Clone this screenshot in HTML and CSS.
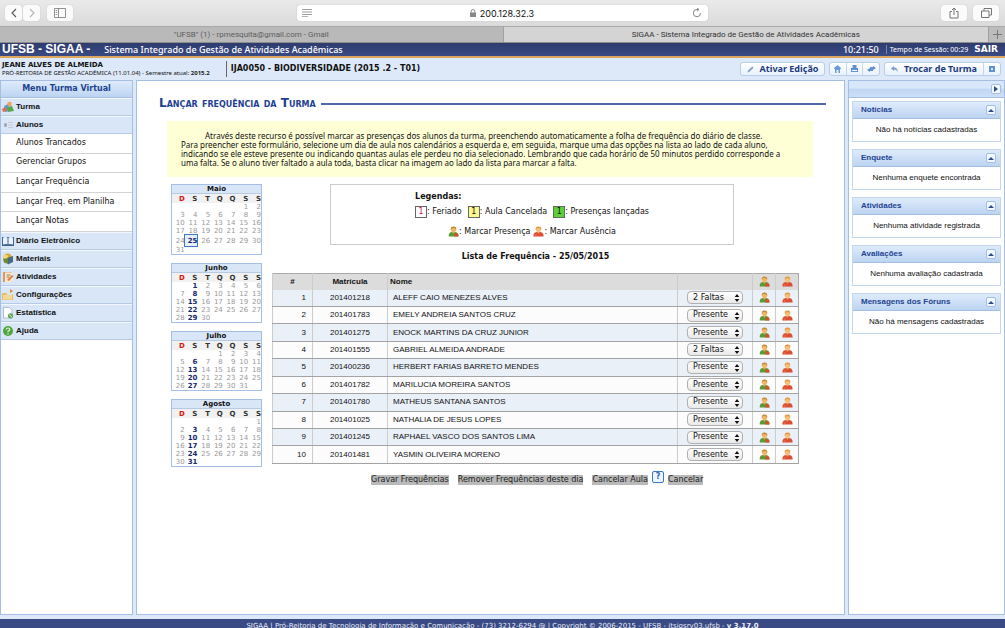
FILE: index.html
```html
<!DOCTYPE html>
<html lang="pt-BR">
<head>
<meta charset="utf-8">
<meta name="viewport" content="width=device-width, initial-scale=1">
<title>SIGAA - Sistema Integrado de Gestão de Atividades Acadêmicas</title>
<link rel="stylesheet" href="styles.css">
</head>
<body>
<svg class="defs" aria-hidden="true">
  <symbol id="person-present" viewBox="0 0 12 12">
    <path d="M.8 11.500V9.500Q1.200 7 4 6.600L8 6.600Q10.800 7 11 9.500V11.500Z" fill="#5a9a35"/>
    <path d="M6.500 11.500L7.500 7.800Q10.700 7.200 11.500 9.500V11.500Z" fill="#d0532c"/>
    <path d="M4 6.500L6 8.500L8 6.500Z" fill="#d9a24c"/>
    <circle cx="6" cy="3.800" r="2.900" fill="#efb869"/>
    <path d="M3 4Q2.600 .6 6 .5Q9.400 .6 9 4Q8 2.200 6 2.200Q4 2.200 3 4Z" fill="#c58a35"/>
  </symbol>
  <symbol id="person-absent" viewBox="0 0 12 12">
    <path d="M.5 11.500V9.500Q1 7 4 6.600L8 6.600Q11 7 11.500 9.500V11.500Z" fill="#dc4e34"/>
    <path d="M1.500 8.800L4.200 11.300M4.200 8.800L1.500 11.300" stroke="#ea7358" stroke-width=".8"/>
    <path d="M4 6.500L6 8.500L8 6.500Z" fill="#e89a50"/>
    <circle cx="6" cy="3.800" r="2.900" fill="#f6bf7c"/>
    <path d="M3 4Q2.600 .6 6 .5Q9.400 .6 9 4Q8 2.200 6 2.200Q4 2.200 3 4Z" fill="#e09a45"/>
  </symbol>
  <symbol id="updown" viewBox="0 0 6 8">
    <path d="M3 0L5.300 3H.7ZM3 8L.7 5H5.300Z" fill="#111"/>
  </symbol>
</svg>

<header class="browser">
  <div class="toolbar">
    <div class="group">
      <div class="nav-pair">
        <button class="chrome-btn" aria-label="Voltar"><svg width="8" height="10" viewBox="0 0 8 10"><path d="M6 1L2 5L6 9" fill="none" stroke="#555" stroke-width="1.100"/></svg></button>
        <button class="chrome-btn" aria-label="Avançar"><svg width="8" height="10" viewBox="0 0 8 10"><path d="M2 1L6 5L2 9" fill="none" stroke="#b5b5b5" stroke-width="1.100"/></svg></button>
      </div>
      <button class="chrome-btn wide" aria-label="Barra lateral"><svg width="12" height="10" viewBox="0 0 12 10"><path d="M.5.500h11v9H.5zM4.500.500v9M1.700 2.500h1.500M1.700 4.500h1.500M1.700 6.500h1.500" fill="none" stroke="#777" stroke-width=".8"/></svg></button>
    </div>
    <div class="address">
      <svg width="10" height="8" viewBox="0 0 10 8"><path d="M0 .5h10M0 3h10M0 5.500h10M0 7.700h6" stroke="#888" stroke-width=".8"/></svg>
      <span class="url"><svg width="6" height="8" viewBox="0 0 6 8"><path d="M0 3.500h6V8H0z" fill="#888"/><path d="M1.200 4V2.300a1.800 1.800 0 0 1 3.600 0V4" fill="none" stroke="#888" stroke-width=".9"/></svg>200.128.32.3</span>
      <svg width="10" height="10" viewBox="0 0 10 10"><path d="M8.500 5A3.600 3.600 0 1 1 5 1.500H6.500M5 0L7 1.500L5 3.200" fill="none" stroke="#777" stroke-width=".9"/></svg>
    </div>
    <div class="group end">
      <button class="chrome-btn tool" aria-label="Compartilhar"><svg width="10" height="12" viewBox="0 0 10 12"><path d="M3 4.500H1V11H9V4.500H7M5 8V1M3 3L5 1L7 3" fill="none" stroke="#666" stroke-width=".9"/></svg></button>
      <button class="chrome-btn tool" aria-label="Abas"><svg width="11" height="10" viewBox="0 0 11 10"><path d="M3 2.500V.5H10.500V7H8M.5 3H8V9.500H.5Z" fill="none" stroke="#666" stroke-width=".9"/></svg></button>
    </div>
  </div>
  <div class="tabs">
    <button class="tab">"UFSB" (1) - rpmesquita@gmail.com - Gmail</button>
    <button class="tab active">SIGAA - Sistema Integrado de Gestão de Atividades Acadêmicas</button>
    <button class="tab-add" aria-label="Nova aba"><svg width="9" height="9" viewBox="0 0 9 9"><path d="M4.500 0v9M0 4.500h9" stroke="#777"/></svg></button>
  </div>
</header>

<div class="system-bar">
  <strong class="brand">UFSB - SIGAA -</strong>
  <span class="system">Sistema Integrado de Gestão de Atividades Acadêmicas</span>
  <span class="clock">10:21:50</span>
  <span class="session">Tempo de Sessão: 00:29</span>
  <a class="exit" href="#">SAIR</a>
</div>

<div class="class-bar">
  <div class="user"><strong class="user-name">JEANE ALVES DE ALMEIDA</strong><span>PRÓ-REITORIA DE GESTÃO ACADÊMICA (11.01.04) - Semestre atual: <b>2015.2</b></span></div>
  <strong class="course">IJA0050 - BIODIVERSIDADE (2015 .2 - T01)</strong>
  <div class="actions">
    <button class="pill edit"><svg width="7" height="7" viewBox="0 0 7 7"><path d="M.5 6.500L1 4.800L5.300.5L6.500 1.700L2.200 6Z" fill="#7d9cc9"/></svg>Ativar Edição</button>
    <div class="pill trio">
      <button aria-label="Início"><svg width="7" height="8" viewBox="0 0 7 8"><path d="M0 3L3.500 0L7 3V4H6V8H1V4H0Z" fill="#6b9bd4"/><path d="M2.500 5h2v3h-2z" fill="#e6f0fb"/></svg></button>
      <button aria-label="Imprimir"><svg width="7" height="8" viewBox="0 0 7 8"><path d="M1.500 0h4v3H7v4H0V3H1.500Z" fill="#5f92d0"/><path d="M1 5h5v1H1z" fill="#fff"/></svg></button>
      <button aria-label="Alternar"><svg width="9" height="6" viewBox="0 0 9 6"><path d="M3 1h3V0l3 2-3 2V3H3zM6 3v2H3v1L0 4l3-2v1z" fill="#5f92d0"/></svg></button>
    </div>
    <div class="pill swap">
      <button class="swap-main"><svg width="7" height="6" viewBox="0 0 7 6"><path d="M3 0L0 2.500L3 5V3.500Q6 3.200 6.500 6Q7 1.800 3 1.600Z" fill="#7d9cc9"/></svg>Trocar de Turma</button>
      <button class="swap-more" aria-label="Mais"><svg width="6" height="6" viewBox="0 0 6 6"><path d="M0 0h6v6H0z" fill="#5f92d0"/><path d="M2 2h2v2H2z" fill="#dbe9fa"/></svg></button>
    </div>
  </div>
</div>

<div class="workspace">
  <nav class="menu">
    <h2 class="menu-title">Menu Turma Virtual</h2>
    <a class="menu-item" href="#"><svg width="12" height="12" viewBox="0 0 12 12"><path d="M2 5l4-2 2 7-5 1z" fill="#5d9bd8"/><circle cx="7.500" cy="3" r="2.300" fill="#f0a35a"/><path d="M5 6l5-1 2 5-6 1z" fill="#59a845"/><path d="M0 8l3-2 2 4-4 1z" fill="#e06f4d"/></svg>Turma</a>
    <a class="menu-item" href="#"><svg width="12" height="12" viewBox="0 0 12 12"><path d="M2 4h3v4H2zM6 3h5v1H6zM6 5.500h5v1H6zM6 8h5v1H6z" fill="#c3cbd5"/><path d="M2.500 4.500h2v3h-2z" fill="#8d9bac"/></svg>Alunos</a>
    <ul class="submenu">
      <li><a href="#">Alunos Trancados</a></li>
      <li><a href="#">Gerenciar Grupos</a></li>
      <li><a href="#">Lançar Frequência</a></li>
      <li><a href="#">Lançar Freq. em Planilha</a></li>
      <li><a href="#">Lançar Notas</a></li>
    </ul>
    <a class="menu-item" href="#"><svg width="12" height="12" viewBox="0 0 12 12"><path d="M0 2h12v9H0z" fill="#3d6396"/><path d="M1 2.500q3-1 4.500.3V9.300Q4 8.500 1 9.500zM11 2.500q-3-1-4.500.3V9.300Q8 8.500 11 9.500z" fill="#e9f2fc"/></svg>Diário Eletrônico</a>
    <a class="menu-item" href="#"><svg width="12" height="12" viewBox="0 0 12 12"><circle cx="5.500" cy="5" r="4.500" fill="#d9a928"/><path d="M1 3q3-3 5 0l-1 3-3 1z" fill="#f3d97a"/><path d="M5 5l6-2v6l-5 2.500z" fill="#4b6c80"/><path d="M1 6l5-1v6L2 9.500z" fill="#6d8a3c"/></svg>Materiais</a>
    <a class="menu-item" href="#"><svg width="12" height="12" viewBox="0 0 12 12"><path d="M1 1h9v10H1z" fill="#d99a60"/><path d="M3 1.500h8v8l-2 1.500H3z" fill="#f8ead9"/><path d="M4.500 4h4M4.500 6h3" stroke="#a77b52"/><path d="M5 9l5-5 1.500 1L7 10z" fill="#e07b33"/></svg>Atividades</a>
    <a class="menu-item" href="#"><svg width="12" height="12" viewBox="0 0 12 12"><path d="M0 4h4l1 1h6v6H0z" fill="#e7bd6b"/><path d="M5 2h4l2 2-2 4-4-1z" fill="#dfe4ea"/><path d="M8 0l3 2-3 2z" fill="#d98740"/><path d="M1 6h9v4.500H1z" fill="#f4d896"/></svg>Configurações</a>
    <a class="menu-item" href="#"><svg width="12" height="12" viewBox="0 0 12 12"><path d="M1.500.5h6l2.500 2.500v8h-8.500z" fill="#fff" stroke="#aebfcf"/><circle cx="8.500" cy="8.800" r="2.600" fill="#62a452"/><path d="M7 7.500l3 2.500" stroke="#d4ebce"/></svg>Estatística</a>
    <a class="menu-item" href="#"><svg width="12" height="12" viewBox="0 0 12 12"><circle cx="6" cy="6" r="5" fill="#4ea63c"/><path d="M4.200 4.500Q4.400 3 6 3t1.800 1.400Q7.800 5.300 6 6.300V7.200M6 8.200v1.200" fill="none" stroke="#e3f6dc" stroke-width="1.200"/></svg>Ajuda</a>
  </nav>

  <main class="content">
    <h1 class="page-title">Lançar frequência da Turma</h1>
    <p class="notice">Através deste recurso é possível marcar as presenças dos alunos da turma, preenchendo automaticamente a folha de frequência do diário de classe.<br>Para preencher este formulário, selecione um dia de aula nos calendários a esquerda e, em seguida, marque uma das opções na lista ao lado de cada aluno,<br>indicando se ele esteve presente ou indicando quantas aulas ele perdeu no dia selecionado. Lembrando que cada horário de 50 minutos perdido corresponde a<br>uma falta. Se o aluno tiver faltado a aula toda, basta clicar na imagem ao lado da lista para marcar a falta.</p>
    <div class="columns">
      <div class="calendars" id="calendars"></div>
      <section class="attendance">
        <div class="legend">
          <div class="legend-inner">
            <strong>Legendas:</strong>
            <div class="legend-row">
              <span><i class="day holiday">1</i>: Feriado</span>
              <span><i class="day cancelled">1</i>: Aula Cancelada</span>
              <span><i class="day posted">1</i>: Presenças lançadas</span>
            </div>
            <div class="legend-people">
              <span><svg width="11" height="11"><use href="#person-present"/></svg>: Marcar Presença</span>
              <span><svg width="11" height="11"><use href="#person-absent"/></svg>: Marcar Ausência</span>
            </div>
          </div>
        </div>
        <h2 class="list-title">Lista de Frequência - 25/05/2015</h2>
        <table class="roster">
          <colgroup><col class="c-num"><col class="c-id"><col><col class="c-status"><col class="c-mark"><col class="c-mark"></colgroup>
          <thead><tr><th>#</th><th>Matrícula</th><th class="name">Nome</th><th></th><th><svg width="11" height="11"><use href="#person-present"/></svg></th><th><svg width="11" height="11"><use href="#person-absent"/></svg></th></tr></thead>
          <tbody id="roster"></tbody>
        </table>
        <div class="form-actions">
          <button class="flat">Gravar Frequências</button>
          <button class="flat">Remover Frequências deste dia</button>
          <span class="cancel-group"><button class="flat">Cancelar Aula</button><button class="help" aria-label="Ajuda sobre cancelar aula">?</button><button class="flat">Cancelar</button></span>
        </div>
      </section>
    </div>
  </main>

  <aside class="side">
    <div class="side-head"><button class="toggle" aria-label="Recolher painel"><svg width="4" height="6" viewBox="0 0 4 6"><path d="M0 0L4 3L0 6Z" fill="#2b4f8e"/></svg></button></div>
    <div class="cards" id="cards"></div>
  </aside>
</div>

<footer class="footer">SIGAA | Pró-Reitoria de Tecnologia de Informação e Comunicação - (73) 3212-6294 @ | Copyright © 2006-2015 - UFSB - itsigsrv03.ufsb - <b>v 3.17.0</b></footer>
<script src="app.js"></script>
</body>
</html>
```
FILE: styles.css
```css
* { box-sizing: border-box; }

body {
  margin: 0;
  height: 100vh;
  overflow: hidden;
  display: flex;
  flex-direction: column;
  background: #dde9f8;
  color: #111;
  font: 8px/9px "DejaVu Sans", Verdana, sans-serif;
}

button, select { font: inherit; color: inherit; margin: 0; padding: 0; border: 0; background: none; }
a { color: inherit; text-decoration: none; }
h1, h2, h3, p, ul { margin: 0; padding: 0; }
svg { display: block; flex: none; }
.defs { display: none; }

/* Browser window */
.browser { flex: none; font-family: Inter, Roboto, sans-serif; }
.toolbar {
  height: 26px;
  padding: 0 6px 0 5px;
  display: grid;
  grid-template-columns: 1fr 411px 1fr;
  align-items: center;
  background: linear-gradient(#eaeaea, #dadada);
}
.group { display: flex; gap: 7px; }
.group.end { justify-content: flex-end; gap: 6px; }
.nav-pair { display: flex; gap: 1px; }
.chrome-btn {
  width: 17px;
  height: 16px;
  display: grid;
  place-items: center;
  border-radius: 3px;
  background: #fbfbfb;
  box-shadow: 0 0 1px #aaa;
}
.chrome-btn.wide, .chrome-btn.tool { width: 26px; }
.address {
  height: 16px;
  padding: 0 5px;
  display: flex;
  align-items: center;
  justify-content: space-between;
  border-radius: 3px;
  background: #fff;
  box-shadow: 0 0 1px #aaa;
}
.url { display: flex; align-items: center; gap: 4px; font-size: 9px; }
.tabs { height: 17px; display: flex; border-top: 1px solid #a9a9a9; border-bottom: 1px solid #8d8d8d; font-family: Roboto, sans-serif; }
.tab { flex: 0 0 50%; font-size: 8px; color: #5e5e5e; background: #b9b9b9; }
.tab.active { flex: 1; color: #333; background: #d4d4d4; border-left: 1px solid #a0a0a0; }
.tab-add { width: 17px; display: grid; place-items: center; background: #bcbcbc; border-left: 1px solid #a0a0a0; }

/* System header */
.system-bar {
  flex: none;
  height: 15px;
  padding: 0 7px 0 2px;
  display: flex;
  align-items: center;
  color: #fff;
  background: linear-gradient(#2e3c6e, #394a84);
  border-bottom: 2px solid #dba65e;
  font-family: "Noto Sans", sans-serif;
}
.brand { font: bold 12px/13px "Liberation Sans", Arial, sans-serif; }
.system { flex: 1; margin-left: 14px; font-size: 9px; font-weight: 500; }
.clock { font-size: 9px; font-weight: 500; padding-right: 7px; }
.session { font-size: 7px; padding-left: 3px; border-left: 1px solid #7884ad; }
.exit { margin-left: 6px; font: bold 9px/9px "DejaVu Sans", Verdana, sans-serif; }

.class-bar { flex: none; height: 22px; display: flex; align-items: center; padding-right: 4px; }
.user { display: grid; padding: 0 16px 0 2px; font: 6px/8px "Noto Sans", sans-serif; }
.user-name { font: bold 7px/8px "DejaVu Sans", Verdana, sans-serif; }
.user b { color: #222; }
.course { flex: 1; padding: 3px 0 4px 4px; border-left: 1px solid #666; font-size: 8px; }
.actions { display: flex; gap: 4px; color: #1c3c80; font: bold 9px/12px "Noto Sans", sans-serif; }
.pill {
  height: 14px;
  display: flex;
  align-items: center;
  justify-content: center;
  border: 1px solid #b7cdeb;
  border-radius: 3px;
  background: linear-gradient(#fff, #e9f1fb);
}
.edit { width: 85px; gap: 6px; }
.trio { width: 51px; }
.trio button { flex: 1; height: 100%; display: grid; place-items: center; }
.trio button + button, .swap-more { border-left: 1px solid #c5d7ef; }
.swap { width: 117px; }
.swap-main { flex: 1; display: flex; align-items: center; justify-content: center; gap: 6px; }
.swap-more { width: 17px; height: 100%; display: grid; place-items: center; }

/* Three panel layout */
.workspace { flex: 1; min-height: 0; display: grid; grid-template-columns: 133px minmax(0, 1fr) 157px; column-gap: 3px; }
.menu, .content, .side { border: 1px solid #a5bfe2; background: #fff; }
.menu-title {
  height: 17px;
  color: #1f4391;
  font-size: 8px;
  line-height: 16px;
  text-align: center;
  background: linear-gradient(#dfebfb, #bcd4f2);
  border-bottom: 1px solid #a5bfe2;
}
.menu-item {
  height: 18px;
  padding-left: 1px;
  display: flex;
  align-items: center;
  gap: 2px;
  font: bold 8px/10px "Liberation Sans", Arial, sans-serif;
  background: #d8e6f7;
  border-top: 1px solid #f3f8fe;
  border-bottom: 1px solid #b7cae4;
}
.submenu { height: 98px; display: grid; grid-auto-rows: 1fr; list-style: none; }
.submenu li { display: flex; align-items: center; padding: 0 0 2px 15px; border-bottom: 1px solid #d3d3d3; }

.content { padding: 15px 18px 0 22px; }
.page-title {
  display: flex;
  align-items: center;
  gap: 5px;
  color: #1f3f94;
  font-size: 12px;
  line-height: 15px;
  font-variant: small-caps;
}
.page-title::after { content: ""; flex: 1; height: 2px; background: #5268ad; }
.notice {
  margin: 10px 13px 0 8px;
  padding: 10px 0 10px 14px;
  text-indent: 24px;
  white-space: nowrap;
  background: #ffffd6;
  color: #111;
  font-family: "Noto Sans", sans-serif;
}
.columns { margin-top: 7px; padding: 0 27px 0 12px; display: grid; grid-template-columns: 91px minmax(0, 1fr); column-gap: 10px; }

/* Calendars */
.calendars { display: grid; gap: 8px; align-content: start; }
.calendar { width: 100%; table-layout: fixed; border-collapse: separate; border-spacing: 0; border: 1px solid #a5bfe2; font-size: 7px; line-height: 8px; }
.calendar th, .calendar td { padding: 0; height: 8px; text-align: right; white-space: nowrap; color: #999; }
.calendar .month { height: 9px; text-align: center; color: #111; background: #d8e6f7; border-bottom: 1px solid #b7cae4; }
.calendar .dow th { height: 9px; color: #333; background: #f1f1f1; }
.calendar .dow th:first-child { color: #e01414; }
.calendar .class-day { color: #15296f; font-weight: bold; }
.calendar .selected { height: 11px; color: #15296f; font-weight: bold; outline: 1px solid #3f76c6; background: #e7f0fd; }

/* Attendance form */
.legend { width: 404px; max-width: 100%; margin: 0 auto 0 58px; padding: 7px 0 6px; display: flex; justify-content: center; border: 1px solid #ccc; }
.legend-inner { display: grid; gap: 5px; }
.legend-row { display: flex; align-items: center; gap: 6px; }
.day { display: inline-block; width: 12px; line-height: 10px; border: 1px solid #666; text-align: center; font-style: normal; }
.holiday { color: #e0143c; }
.cancelled { background: #fff88c; }
.posted { background: #5ad237; }
.legend-people { display: flex; justify-content: center; gap: 3px; padding: 3px 0 1px; }
.legend-people span { display: flex; align-items: center; }
.list-title { margin: 7px 0 11px; font-size: 8px; line-height: 10px; text-align: center; }
.roster {
  width: 100%;
  height: 191px;
  table-layout: fixed;
  border-collapse: collapse;
  border: 1px solid #aaa;
  font: 8px/10px "Liberation Sans", Arial, sans-serif;
}
.c-num { width: 40px; }
.c-id { width: 75px; }
.c-status { width: 75px; }
.c-mark { width: 23px; }
.roster th, .roster td { padding: 0; border-left: 1px solid #ccc; border-bottom: 1px solid #a3a3a3; text-align: center; }
.roster th { height: 16px; background: #dcdcdc; border-bottom: 0; }
.roster th.name { text-align: left; padding-left: 2px; }
.roster td:first-child { text-align: right; padding-right: 6px; }
.roster td.name { text-align: left; padding-left: 5px; }
.roster tbody tr:nth-child(odd) { background: #eaf0f8; }
.roster tbody tr:nth-child(even) { background: #fcfcfd; }
.roster th svg, .roster td > button { margin: 0 auto; display: block; }
.picker { position: relative; display: block; width: 56px; height: 13px; margin: 0 auto; }
.picker select {
  width: 100%;
  height: 13px;
  display: block;
  padding: 0 10px 0 5px;
  appearance: none;
  border: 1px solid #b0b0b0;
  border-radius: 4px;
  background: linear-gradient(#fff, #e9e9e9);
  font: 8px/10px "DejaVu Sans", Verdana, sans-serif;
}
.picker svg { position: absolute; right: 3px; top: 3px; pointer-events: none; }
.form-actions { margin-top: 7px; padding-left: 99px; display: flex; gap: 9px; align-items: center; }
.flat { height: 10px; line-height: 10px; background: #b9b9b9; color: #222; white-space: nowrap; }
.cancel-group { display: flex; align-items: center; gap: 4px; }
.help { width: 12px; height: 12px; margin-bottom: 5px; border: 1px solid #3f76c6; border-radius: 2px; background: #eef5ff; color: #2d62b3; font-weight: bold; line-height: 10px; }

/* Right panel */
.side-head {
  height: 17px;
  padding-right: 3px;
  display: flex;
  align-items: center;
  justify-content: flex-end;
  background: linear-gradient(#d9e7fa 45%, #bfd6f3 50%, #cddff7);
  border-bottom: 1px solid #a5bfe2;
}
.toggle { width: 10px; height: 10px; display: grid; place-items: center; border: 1px solid #a5bfe2; border-radius: 2px; background: #f4f8fe; }
.cards { padding: 3px; display: grid; gap: 7px; font: 8px/10px "Liberation Sans", Arial, sans-serif; }
.card { border: 1px solid #c5d7ef; }
.card h3 {
  height: 17px;
  padding: 0 4px 0 8px;
  display: flex;
  align-items: center;
  justify-content: space-between;
  color: #1f4391;
  font-size: 8px;
  background: linear-gradient(#dfebfb, #bcd4f2);
  border-bottom: 1px solid #a5bfe2;
}
.card p { padding: 6px 0; text-align: center; }

.footer {
  flex: none;
  height: 13px;
  padding-top: 3px;
  overflow: hidden;
  border-top: 4px solid #dde9f8;
  background: #394a84;
  color: #e8ecf6;
  text-align: center;
  font-size: 7px;
  line-height: 9px;
}
```
FILE: app.js
```js
const students = [
  [201401218, "ALEFF CAIO MENEZES ALVES", "2 Faltas"],
  [201401783, "EMELY ANDREIA SANTOS CRUZ", "Presente"],
  [201401275, "ENOCK MARTINS DA CRUZ JUNIOR", "Presente"],
  [201401555, "GABRIEL ALMEIDA ANDRADE", "2 Faltas"],
  [201400236, "HERBERT FARIAS BARRETO MENDES", "Presente"],
  [201401782, "MARILUCIA MOREIRA SANTOS", "Presente"],
  [201401780, "MATHEUS SANTANA SANTOS", "Presente"],
  [201401025, "NATHALIA DE JESUS LOPES", "Presente"],
  [201401245, "RAPHAEL VASCO DOS SANTOS LIMA", "Presente"],
  [201401481, "YASMIN OLIVEIRA MORENO", "Presente"]
];
const options = ["Presente", "1 Falta", "2 Faltas"];
const mark = (icon, label) =>
  `<td><button aria-label="${label}"><svg width="11" height="11"><use href="#${icon}"/></svg></button></td>`;

document.getElementById("roster").innerHTML = students.map(([id, name, status], i) => `
  <tr><td>${i + 1}</td><td>${id}</td><td class="name">${name}</td>
  <td><span class="picker"><select aria-label="Frequência de ${name}">${options.map(o =>
    `<option${o === status ? " selected" : ""}>${o}</option>`).join("")}</select><svg width="6" height="8"><use href="#updown"/></svg></span></td>
  ${mark("person-present", "Marcar presença")}${mark("person-absent", "Marcar ausência")}</tr>`).join("");

const year = 2015;
const months = [
  { name: "Maio", index: 4, classes: [], selected: 25 },
  { name: "Junho", index: 5, classes: [1, 8, 15, 22, 29] },
  { name: "Julho", index: 6, classes: [6, 13, 20, 27] },
  { name: "Agosto", index: 7, classes: [3, 10, 17, 24, 31] }
];

document.getElementById("calendars").innerHTML = months.map(m => {
  const first = new Date(year, m.index, 1).getDay();
  const days = new Date(year, m.index + 1, 0).getDate();
  let weeks = "";
  for (let start = 1 - first; start <= days; start += 7) {
    weeks += "<tr>";
    for (let d = start; d < start + 7; d++) {
      const kind = d === m.selected ? "selected" : m.classes.includes(d) ? "class-day" : "";
      weeks += `<td class="${kind}">${d > 0 && d <= days ? d : ""}</td>`;
    }
    weeks += "</tr>";
  }
  return `<table class="calendar"><thead><tr><th class="month" colspan="7">${m.name}</th></tr>
    <tr class="dow">${[..."DSTQQSS"].map(d => `<th>${d}</th>`).join("")}</tr></thead><tbody>${weeks}</tbody></table>`;
}).join("");

document.getElementById("cards").innerHTML = [
  ["Notícias", "Não há notícias cadastradas"],
  ["Enquete", "Nenhuma enquete encontrada"],
  ["Atividades", "Nenhuma atividade registrada"],
  ["Avaliações", "Nenhuma avaliação cadastrada"],
  ["Mensagens dos Fóruns", "Não há mensagens cadastradas"]
].map(([title, text]) => `<section class="card"><h3>${title}<button class="toggle" aria-label="Recolher ${title}"><svg width="6" height="3" viewBox="0 0 6 3"><path d="M0 3L3 0L6 3Z" fill="#2b4f8e"/></svg></button></h3><p>${text}</p></section>`).join("");
```
